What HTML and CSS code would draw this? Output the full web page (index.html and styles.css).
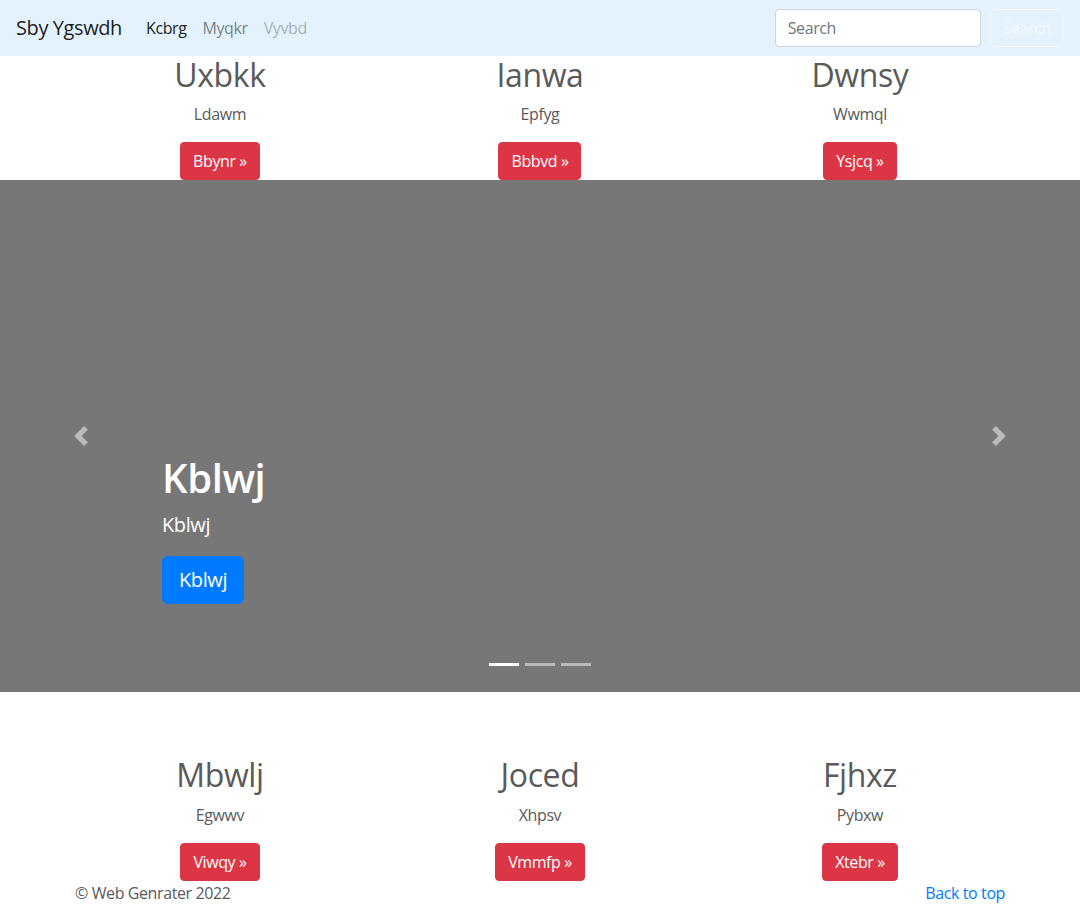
FILE: index.html
```html
<!DOCTYPE html>
<html lang="en">
<head>
<meta charset="utf-8">
<title>Sby Ygswdh</title>
<link rel="stylesheet" href="styles.css">
</head>
<body>
<nav class="navbar">
  <a class="brand" href="#">Sby Ygswdh</a>
  <ul class="nav">
    <li><a class="nav-link active" href="#">Kcbrg</a></li>
    <li><a class="nav-link" href="#">Myqkr</a></li>
    <li><a class="nav-link disabled" href="#">Vyvbd</a></li>
  </ul>
  <form class="search">
    <input class="search-input" type="text" placeholder="Search">
    <button class="search-btn" type="button">Search</button>
  </form>
</nav>

<main>
  <div class="container">
    <div class="row">
      <div class="col">
        <h2 class="feature-title">Uxbkk</h2>
        <p class="feature-text">Ldawm</p>
        <a class="btn btn-danger" href="#">Bbynr &raquo;</a>
      </div>
      <div class="col">
        <h2 class="feature-title">Ianwa</h2>
        <p class="feature-text">Epfyg</p>
        <a class="btn btn-danger" href="#">Bbbvd &raquo;</a>
      </div>
      <div class="col">
        <h2 class="feature-title">Dwnsy</h2>
        <p class="feature-text">Wwmql</p>
        <a class="btn btn-danger" href="#">Ysjcq &raquo;</a>
      </div>
    </div>
  </div>

  <div class="carousel">
    <ol class="indicators">
      <li class="active"></li>
      <li></li>
      <li></li>
    </ol>
    <div class="caption">
      <h1 class="caption-title">Kblwj</h1>
      <p class="lead">Kblwj</p>
      <p class="caption-action"><a class="btn btn-lg btn-primary" href="#">Kblwj</a></p>
    </div>
    <a class="control control-prev" href="#" aria-label="Previous">
      <svg class="control-icon" viewBox="0 0 8 8" width="20" height="20"><path fill="#fff" d="M5.25 0l-4 4 4 4 1.5-1.5L4.25 4l2.5-2.5L5.25 0z"/></svg>
    </a>
    <a class="control control-next" href="#" aria-label="Next">
      <svg class="control-icon" viewBox="0 0 8 8" width="20" height="20"><path fill="#fff" d="M2.75 0l-1.5 1.5L3.75 4l-2.5 2.5L2.75 8l4-4-4-4z"/></svg>
    </a>
  </div>

  <div class="container">
    <div class="row">
      <div class="col">
        <h2 class="feature-title">Mbwlj</h2>
        <p class="feature-text">Egwwv</p>
        <a class="btn btn-danger" href="#">Viwqy &raquo;</a>
      </div>
      <div class="col">
        <h2 class="feature-title">Joced</h2>
        <p class="feature-text">Xhpsv</p>
        <a class="btn btn-danger" href="#">Vmmfp &raquo;</a>
      </div>
      <div class="col">
        <h2 class="feature-title">Fjhxz</h2>
        <p class="feature-text">Pybxw</p>
        <a class="btn btn-danger" href="#">Xtebr &raquo;</a>
      </div>
    </div>
  </div>

  <footer class="container footer">
    <p class="footer-text">&copy; Web Genrater 2022</p>
    <p class="footer-text"><a class="link" href="#">Back to top</a></p>
  </footer>
</main>
</body>
</html>
```

FILE: styles.css
```css
* { box-sizing: border-box; }

html, body {
  margin: 0;
  padding: 0;
}

body {
  font-family: "Open Sans", "Noto Sans", "Liberation Sans", sans-serif;
  font-size: 16px;
  line-height: 1.5;
  letter-spacing: -0.025em;
  color: #5a5a5a;
  background: #fff;
}

a { text-decoration: none; }

/* Navbar */
.navbar {
  display: flex;
  align-items: center;
  height: 56px;
  padding: 8px 16px;
  background: #e3f2fd;
}

.brand {
  font-size: 20px;
  line-height: 30px;
  padding: 5px 0;
  margin-right: 16px;
  color: rgba(0, 0, 0, 0.9);
}

.nav {
  display: flex;
  list-style: none;
  margin: 0 auto 0 0;
  padding: 0;
}

.nav-link {
  display: block;
  padding: 8px;
  color: rgba(0, 0, 0, 0.5);
}

.nav-link.active { color: rgba(0, 0, 0, 0.9); }
.nav-link.disabled { color: rgba(0, 0, 0, 0.3); }

.search {
  display: flex;
  align-items: center;
  margin: 0;
}

.search-input {
  width: 206px;
  height: 38px;
  padding: 6px 12px;
  margin-right: 9px;
  font-family: inherit;
  font-size: 16px;
  line-height: 1.5;
  letter-spacing: inherit;
  color: #495057;
  background: #fff;
  border: 1px solid #ced4da;
  border-radius: 4px;
}

.search-input::placeholder { color: #6c757d; opacity: 1; }

.search-btn {
  height: 38px;
  padding: 6px 12px;
  font-family: inherit;
  font-size: 16px;
  line-height: 1.5;
  letter-spacing: inherit;
  color: #f8f9fa;
  background: transparent;
  border: 1px solid #f8f9fa;
  border-radius: 4px;
}

/* Marketing */
.container {
  width: 960px;
  margin: 0 auto;
  padding: 0 15px;
}

.row {
  display: flex;
  margin: 0 -15px;
}

.col {
  flex: 0 0 33.3333%;
  padding: 0 15px;
  text-align: center;
}

.feature-title {
  margin: 0 0 8px;
  font-size: 32px;
  font-weight: 500;
  line-height: 1.2;
}

.feature-text {
  margin: 0 12px 16px;
}

.btn {
  display: inline-block;
  padding: 6px 12px;
  font-size: 16px;
  line-height: 1.5;
  border: 1px solid transparent;
  border-radius: 4px;
  vertical-align: middle;
}

.btn-danger {
  color: #fff;
  background: #dc3545;
  border-color: #dc3545;
}

.btn-primary {
  color: #fff;
  background: #007bff;
  border-color: #007bff;
}

.btn-lg {
  padding: 8px 16px;
  font-size: 20px;
  line-height: 1.5;
  border-radius: 6px;
}

/* Carousel */
.carousel {
  position: relative;
  height: 512px;
  margin-bottom: 64px;
  background: #777;
  overflow: hidden;
}

.caption {
  position: absolute;
  left: 15%;
  right: 15%;
  bottom: 48px;
  padding: 20px 0;
  color: #fff;
  text-align: left;
  z-index: 10;
}

.caption-title {
  margin: 0 0 8px;
  font-size: 40px;
  font-weight: 600;
  line-height: 1.2;
}

.lead {
  margin: 0 0 16px;
  font-size: 20px;
  font-weight: 400;
}

.caption-action { margin: 0 0 20px; }

.control {
  position: absolute;
  top: 0;
  bottom: 0;
  width: 15%;
  display: flex;
  align-items: center;
  justify-content: center;
  opacity: 0.5;
  z-index: 5;
}

.control-prev { left: 0; }
.control-next { right: 0; }

.control-icon { display: block; width: 20px; height: 20px; }

.indicators {
  position: absolute;
  left: 15%;
  right: 15%;
  bottom: 0;
  display: flex;
  justify-content: center;
  list-style: none;
  margin: 0 0 16px;
  padding: 0;
  z-index: 15;
}

.indicators li {
  width: 30px;
  height: 3px;
  margin: 0 3px;
  box-sizing: content-box;
  border-top: 10px solid transparent;
  border-bottom: 10px solid transparent;
  background-color: #fff;
  background-clip: padding-box;
  opacity: 0.5;
}

.indicators li.active { opacity: 1; }

/* Footer */
.footer {
  display: flex;
  justify-content: space-between;
}

.footer-text { margin: 0; }

.link { color: #007bff; }
```
